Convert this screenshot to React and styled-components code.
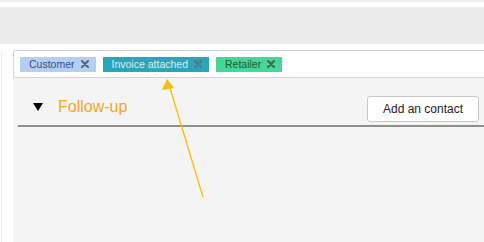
import styled, { createGlobalStyle } from 'styled-components';

const Global = createGlobalStyle`
  html, body { margin: 0; padding: 0; background: #fff; }
  body { font-family: "Liberation Sans", Arial, sans-serif; overflow: hidden; }
  #root { width: 484px; height: 242px; position: relative; overflow: hidden; }
`

const TopLine = styled.div`
  height: 2px;
  background: #eeeeee;
  margin-bottom: 5px;
`

const Band = styled.div`
  height: 37px;
  background: #ececec;
`

const Main = styled.div`
  display: flex;
  margin-top: 6px;
  height: 192px;
`

const Rail = styled.div`
  width: 12px;
  flex: none;
  border-left: 1px solid #ececec;
  margin-left: 1px;
  box-sizing: border-box;
`

const Panel = styled.div`
  flex: 1;
  background: #f4f4f4;
  min-width: 0;
`

const TagBox = styled.div`
  width: calc(100% + 10px);
  height: 28px;
  box-sizing: border-box;
  background: #fff;
  border: 1px solid #d2d2d2;
  border-radius: 3px 0 0 3px;
  display: flex;
  align-items: center;
  gap: 7px;
  padding-left: 6px;
`

const Tag = styled.span`
  display: inline-flex;
  align-items: center;
  height: 15px;
  padding: 0 7px 0 9px;
  font-size: 10.5px;
  background: ${p => p.$bg};
  color: ${p => p.$fg};
  svg {
    margin-left: 6px;
  }
`

const HeadRow = styled.div`
  display: flex;
  align-items: flex-end;
  justify-content: space-between;
  height: 49px;
  box-sizing: border-box;
  margin-left: 5px;
  padding: 0 5px 3px 15px;
  border-bottom: 2px solid #8e8e8e;
`

const Title = styled.div`
  display: flex;
  align-items: center;
  gap: 15px;
  height: 26px;
  padding-bottom: 5px;
  box-sizing: border-box;
  color: #f5a623;
  font-size: 16px;
  .tri {
    width: 0;
    height: 0;
    border-left: 5px solid transparent;
    border-right: 5px solid transparent;
    border-top: 8px solid #000;
  }
`

const Button = styled.button`
  height: 26px;
  width: 112px;
  padding: 0;
  background: #fff;
  border: 1px solid #c8c8c8;
  border-radius: 3px;
  font-family: "Liberation Sans", Arial, sans-serif;
  font-size: 12px;
  color: #222;
`

const Arrow = styled.svg`
  position: absolute;
  left: 0;
  top: 0;
  pointer-events: none;
`

const tags = [
  { label: 'Customer', bg: '#b5cff4', fg: '#3c4d7a', x: '#5a6272' },
  { label: 'Invoice attached', bg: '#2ca4ba', fg: '#d9eff3', x: '#5f7478' },
  { label: 'Retailer', bg: '#44d795', fg: '#1f5a3c', x: '#4d5f56' },
]

const Cross = ({ color }) => (
  <svg width='8' height='8' viewBox='0 0 8 8'>
    <path d='M1 1 L7 7 M7 1 L1 7' stroke={color} strokeWidth='2' strokeLinecap='round' />
  </svg>
)

const App = () => (
  <>
    <Global />
    <TopLine />
    <Band />
    <Main>
      <Rail />
      <Panel>
        <TagBox>
          {tags.map(t => (
            <Tag key={t.label} $bg={t.bg} $fg={t.fg}>
              {t.label}<Cross color={t.x} />
            </Tag>
          ))}
        </TagBox>
        <HeadRow>
          <Title><span className='tri' />Follow-up</Title>
          <Button>Add an contact</Button>
        </HeadRow>
      </Panel>
    </Main>
    <Arrow width='484' height='242'>
      <line x1='203' y1='197' x2='170' y2='88' stroke='#fbbc05' strokeWidth='1.3' />
      <polygon points='167,79 162,90 174,88' fill='#fbbc05' />
    </Arrow>
  </>
)

export default App;
